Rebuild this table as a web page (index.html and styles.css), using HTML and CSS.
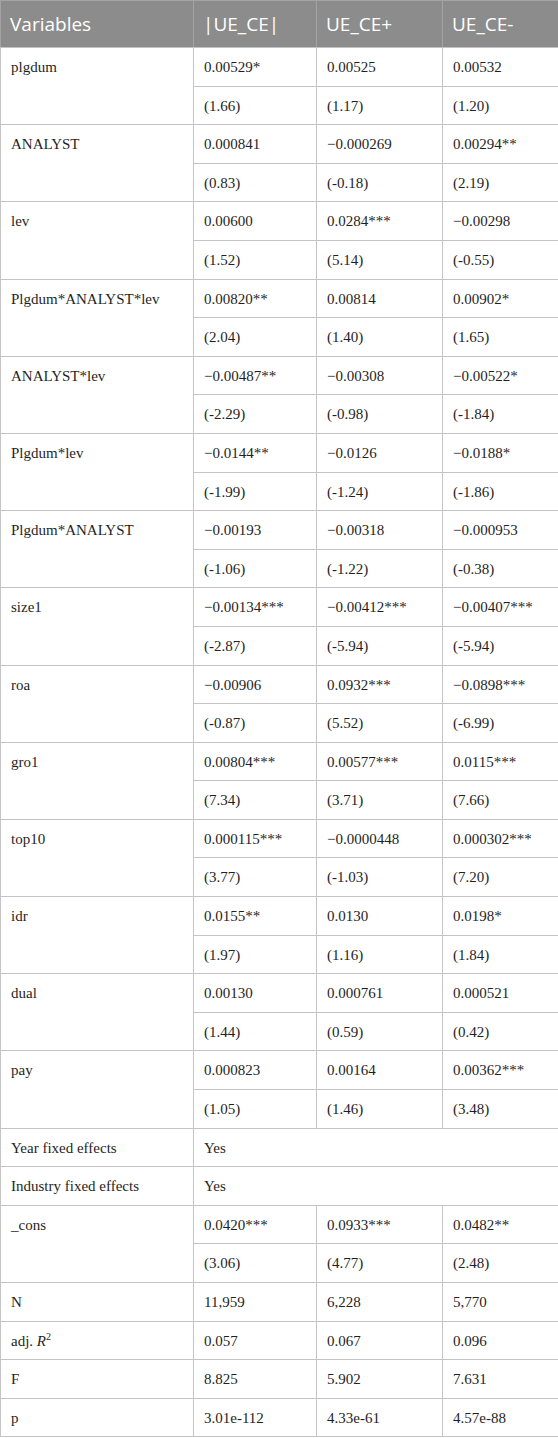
FILE: index.html
```html
<!DOCTYPE html>
<html>
<head>
<meta charset="utf-8">
<link rel="stylesheet" href="styles.css">
</head>
<body>
<table class="reg">
  <colgroup>
    <col class="c-var"><col class="c-a"><col class="c-b"><col class="c-c">
  </colgroup>
  <thead>
    <tr><th>Variables</th><th>|UE_CE|</th><th>UE_CE+</th><th>UE_CE-</th></tr>
  </thead>
  <tbody>
    <tr><td class="lbl" rowspan="2">plgdum</td><td>0.00529*</td><td>0.00525</td><td>0.00532</td></tr>
    <tr><td>(1.66)</td><td>(1.17)</td><td>(1.20)</td></tr>
    <tr><td class="lbl" rowspan="2">ANALYST</td><td>0.000841</td><td>−0.000269</td><td>0.00294**</td></tr>
    <tr><td>(0.83)</td><td>(-0.18)</td><td>(2.19)</td></tr>
    <tr><td class="lbl" rowspan="2">lev</td><td>0.00600</td><td>0.0284***</td><td>−0.00298</td></tr>
    <tr><td>(1.52)</td><td>(5.14)</td><td>(-0.55)</td></tr>
    <tr><td class="lbl" rowspan="2">Plgdum*ANALYST*lev</td><td>0.00820**</td><td>0.00814</td><td>0.00902*</td></tr>
    <tr><td>(2.04)</td><td>(1.40)</td><td>(1.65)</td></tr>
    <tr><td class="lbl" rowspan="2">ANALYST*lev</td><td>−0.00487**</td><td>−0.00308</td><td>−0.00522*</td></tr>
    <tr><td>(-2.29)</td><td>(-0.98)</td><td>(-1.84)</td></tr>
    <tr><td class="lbl" rowspan="2">Plgdum*lev</td><td>−0.0144**</td><td>−0.0126</td><td>−0.0188*</td></tr>
    <tr><td>(-1.99)</td><td>(-1.24)</td><td>(-1.86)</td></tr>
    <tr><td class="lbl" rowspan="2">Plgdum*ANALYST</td><td>−0.00193</td><td>−0.00318</td><td>−0.000953</td></tr>
    <tr><td>(-1.06)</td><td>(-1.22)</td><td>(-0.38)</td></tr>
    <tr><td class="lbl" rowspan="2">size1</td><td>−0.00134***</td><td>−0.00412***</td><td>−0.00407***</td></tr>
    <tr><td>(-2.87)</td><td>(-5.94)</td><td>(-5.94)</td></tr>
    <tr><td class="lbl" rowspan="2">roa</td><td>−0.00906</td><td>0.0932***</td><td>−0.0898***</td></tr>
    <tr><td>(-0.87)</td><td>(5.52)</td><td>(-6.99)</td></tr>
    <tr><td class="lbl" rowspan="2">gro1</td><td>0.00804***</td><td>0.00577***</td><td>0.0115***</td></tr>
    <tr><td>(7.34)</td><td>(3.71)</td><td>(7.66)</td></tr>
    <tr><td class="lbl" rowspan="2">top10</td><td>0.000115***</td><td>−0.0000448</td><td>0.000302***</td></tr>
    <tr><td>(3.77)</td><td>(-1.03)</td><td>(7.20)</td></tr>
    <tr><td class="lbl" rowspan="2">idr</td><td>0.0155**</td><td>0.0130</td><td>0.0198*</td></tr>
    <tr><td>(1.97)</td><td>(1.16)</td><td>(1.84)</td></tr>
    <tr><td class="lbl" rowspan="2">dual</td><td>0.00130</td><td>0.000761</td><td>0.000521</td></tr>
    <tr><td>(1.44)</td><td>(0.59)</td><td>(0.42)</td></tr>
    <tr><td class="lbl" rowspan="2">pay</td><td>0.000823</td><td>0.00164</td><td>0.00362***</td></tr>
    <tr><td>(1.05)</td><td>(1.46)</td><td>(3.48)</td></tr>
    <tr><td class="lbl">Year fixed effects</td><td colspan="3">Yes</td></tr>
    <tr><td class="lbl">Industry fixed effects</td><td colspan="3">Yes</td></tr>
    <tr><td class="lbl" rowspan="2">_cons</td><td>0.0420***</td><td>0.0933***</td><td>0.0482**</td></tr>
    <tr><td>(3.06)</td><td>(4.77)</td><td>(2.48)</td></tr>
    <tr><td class="lbl">N</td><td>11,959</td><td>6,228</td><td>5,770</td></tr>
    <tr><td class="lbl">adj. <i>R</i><sup>2</sup></td><td>0.057</td><td>0.067</td><td>0.096</td></tr>
    <tr><td class="lbl">F</td><td>8.825</td><td>5.902</td><td>7.631</td></tr>
    <tr><td class="lbl">p</td><td>3.01e-112</td><td>4.33e-61</td><td>4.57e-88</td></tr>
  </tbody>
</table>
</body>
</html>
```

FILE: styles.css
```css
html, body {
  margin: 0;
  padding: 0;
  background: #ffffff;
}

.reg {
  width: 558px;
  border-collapse: collapse;
  table-layout: fixed;
  font-family: "Liberation Serif", "Times New Roman", serif;
  font-size: 15px;
  color: #1f1f1f;
}

.c-var { width: 193px; }
.c-a { width: 123px; }
.c-b { width: 126px; }
.c-c { width: 116px; }

.reg thead th {
  background: #8c8c8c;
  color: #ffffff;
  font-family: "Open Sans", "Noto Sans", sans-serif;
  font-weight: 400;
  font-size: 19px;
  text-align: left;
  height: 46px;
  padding: 0 9px;
  vertical-align: middle;
  border-left: 1px solid #a3a3a3;
  border-right: 1px solid #a3a3a3;
  border-top: 1px solid #a3a3a3;
  border-bottom: 1px solid #c4c4c4;
}

.reg td {
  border: 1px solid #c4c4c4;
  padding: 9px 10px 0 10px;
  height: 28.6px;
  line-height: 20px;
  vertical-align: top;
  text-align: left;
  white-space: nowrap;
}

.reg td sup {
  font-size: 10px;
  line-height: 0;
  vertical-align: 6px;
}
```
